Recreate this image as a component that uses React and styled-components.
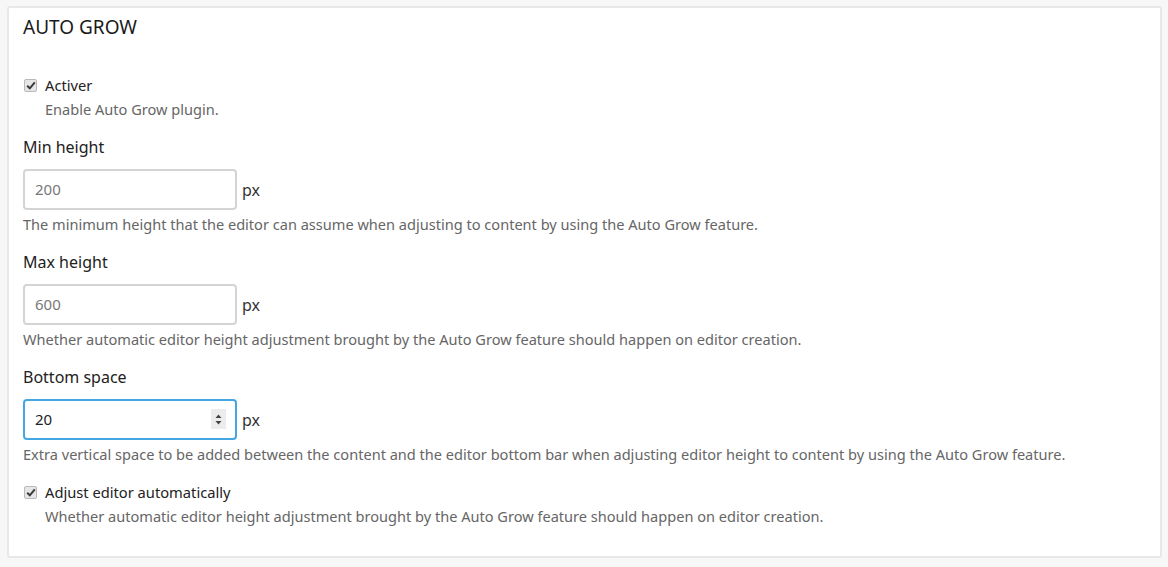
import React from "react";
import styled, { createGlobalStyle } from "styled-components";

const Global = createGlobalStyle`
  html, body { margin: 0; padding: 0; background: #f7f7f7; }
  body { font-family: "Noto Sans", "Open Sans", sans-serif; color: #222; }
`;

const Page = styled.div`
  padding: 6px 6px 10px 7px;
`;

const Panel = styled.section`
  background: #fff;
  border: 2px solid #e8e8e8;
  border-radius: 3px;
  padding: 7px 14px 30px 14px;
`;

const Title = styled.h2`
  margin: 0;
  font-size: 19px;
  font-weight: 400;
  line-height: 24px;
  color: #1a1a1a;
`;

const CheckItem = styled.div`
  margin-top: ${(p) => p.$top}px;
`;

const CheckRow = styled.label`
  display: flex;
  align-items: center;
  gap: 8px;
  height: 20px;
  padding-left: 1px;
  font-size: 14.7px;
  color: #222;
`;

const Box = styled.span`
  width: 11px;
  height: 11px;
  border: 1px solid #b9b9b9;
  border-radius: 2px;
  background: #e6e6e6;
  display: flex;
  align-items: center;
  justify-content: center;
`;

const Description = styled.div`
  margin-top: 4px;
  font-size: 14.57px;
  line-height: 20px;
  color: #666;
  padding-left: ${(p) => (p.$indent ? 22 : 0)}px;
`;

const Field = styled.div`
  margin-top: 16px;
`;

const Label = styled.div`
  font-size: 16px;
  line-height: 24px;
  color: #222;
`;

const InputLine = styled.div`
  margin-top: 10px;
  display: flex;
  align-items: center;
  gap: 5px;
`;

const InputBox = styled.div`
  width: 214px;
  height: 41px;
  box-sizing: border-box;
  border: 2px solid ${(p) => (p.$focused ? "#44a7e2" : "#d4d4d4")};
  border-radius: 4px;
  display: flex;
  align-items: center;
  padding: 0 9px 1px 10px;
  background: #fff;
`;

const Value = styled.span`
  flex: 1;
  font-size: 15px;
  color: ${(p) => (p.$placeholder ? "#777" : "#222")};
`;

const Spinner = styled.span`
  width: 15px;
  height: 20px;
  background: #ececec;
  display: flex;
  align-items: center;
  justify-content: center;
`;

const Unit = styled.span`
  font-size: 16px;
  color: #333;
`;

function Check() {
  return (
    <Box>
      <svg width="10" height="9" viewBox="0 0 10 9">
        <path d="M1.2 4.8 L3.8 7.3 L8.8 1.3" fill="none" stroke="#3a3a3a" strokeWidth="2" />
      </svg>
    </Box>
  );
}

function CheckField({ top, label, desc }) {
  return (
    <CheckItem $top={top}>
      <CheckRow>
        <Check />
        {label}
      </CheckRow>
      <Description $indent>{desc}</Description>
    </CheckItem>
  );
}

function NumberField({ label, value, placeholder, focused, desc }) {
  return (
    <Field>
      <Label>{label}</Label>
      <InputLine>
        <InputBox $focused={focused}>
          <Value $placeholder={placeholder}>{value}</Value>
          {focused && (
            <Spinner>
              <svg width="7" height="11" viewBox="0 0 7 11">
                <path d="M0.5 4 L3.5 0.5 L6.5 4 Z M0.5 7 L3.5 10.5 L6.5 7 Z" fill="#444" />
              </svg>
            </Spinner>
          )}
        </InputBox>
        <Unit>px</Unit>
      </InputLine>
      <Description>{desc}</Description>
    </Field>
  );
}

export default function App() {
  return (
    <>
      <Global />
      <Page>
        <Panel>
          <Title>AUTO GROW</Title>
          <CheckField top={36} label="Activer" desc="Enable Auto Grow plugin." />
          <NumberField
            label="Min height"
            value="200"
            placeholder
            desc="The minimum height that the editor can assume when adjusting to content by using the Auto Grow feature."
          />
          <NumberField
            label="Max height"
            value="600"
            placeholder
            desc="Whether automatic editor height adjustment brought by the Auto Grow feature should happen on editor creation."
          />
          <NumberField
            label="Bottom space"
            value="20"
            focused
            desc="Extra vertical space to be added between the content and the editor bottom bar when adjusting editor height to content by using the Auto Grow feature."
          />
          <CheckField
            top={18}
            label="Adjust editor automatically"
            desc="Whether automatic editor height adjustment brought by the Auto Grow feature should happen on editor creation."
          />
        </Panel>
      </Page>
    </>
  );
}
